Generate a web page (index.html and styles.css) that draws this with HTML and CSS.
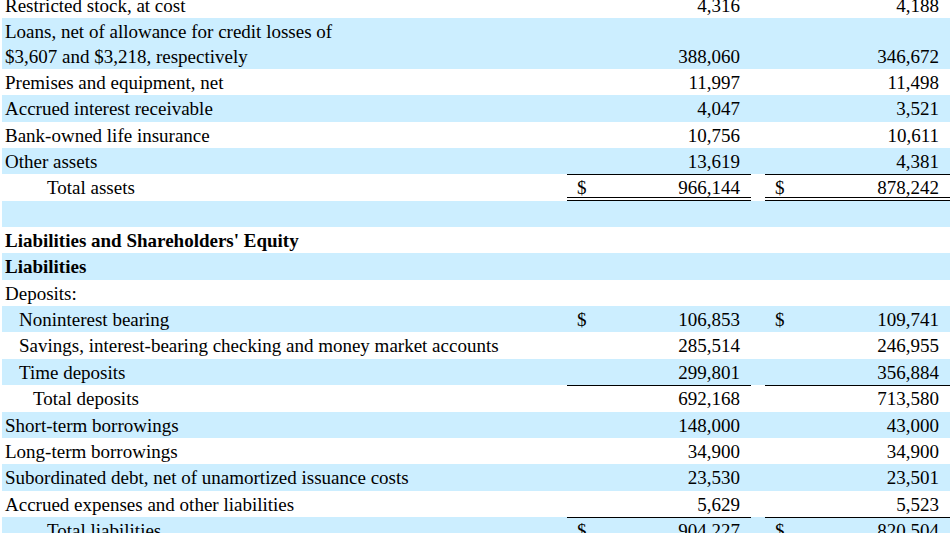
FILE: index.html
```html
<!DOCTYPE html>
<html>
<head>
<meta charset="utf-8">
<link rel="stylesheet" href="styles.css">
</head>
<body>
<table class="bs">
<colgroup>
<col class="c-label"><col class="c-sym"><col class="c-num"><col class="c-gap"><col class="c-sym"><col class="c-num2">
</colgroup>
<tbody>
<tr><td class="lbl">Restricted stock, at cost</td><td class="sym"></td><td class="num">4,316</td><td></td><td class="sym"></td><td class="num">4,188</td></tr>
<tr class="alt"><td class="lbl">Loans, net of allowance for credit losses of<br>$3,607 and $3,218, respectively</td><td class="sym"></td><td class="num">388,060</td><td></td><td class="sym"></td><td class="num">346,672</td></tr>
<tr><td class="lbl">Premises and equipment, net</td><td class="sym"></td><td class="num">11,997</td><td></td><td class="sym"></td><td class="num">11,498</td></tr>
<tr class="alt"><td class="lbl">Accrued interest receivable</td><td class="sym"></td><td class="num">4,047</td><td></td><td class="sym"></td><td class="num">3,521</td></tr>
<tr><td class="lbl">Bank-owned life insurance</td><td class="sym"></td><td class="num">10,756</td><td></td><td class="sym"></td><td class="num">10,611</td></tr>
<tr class="alt"><td class="lbl">Other assets</td><td class="sym"></td><td class="num">13,619</td><td></td><td class="sym"></td><td class="num">4,381</td></tr>
<tr><td class="lbl ind3">Total assets</td><td class="sym top dbl">$</td><td class="num top dbl">966,144</td><td></td><td class="sym top dbl">$</td><td class="num top dbl">878,242</td></tr>
<tr class="alt"><td class="lbl">&nbsp;</td><td></td><td></td><td></td><td></td><td></td></tr>
<tr><td class="lbl bold">Liabilities and Shareholders' Equity</td><td></td><td></td><td></td><td></td><td></td></tr>
<tr class="alt"><td class="lbl bold">Liabilities</td><td></td><td></td><td></td><td></td><td></td></tr>
<tr><td class="lbl">Deposits:</td><td></td><td></td><td></td><td></td><td></td></tr>
<tr class="alt"><td class="lbl ind1">Noninterest bearing</td><td class="sym">$</td><td class="num">106,853</td><td></td><td class="sym">$</td><td class="num">109,741</td></tr>
<tr><td class="lbl ind1">Savings, interest-bearing checking and money market accounts</td><td class="sym"></td><td class="num">285,514</td><td></td><td class="sym"></td><td class="num">246,955</td></tr>
<tr class="alt"><td class="lbl ind1">Time deposits</td><td class="sym"></td><td class="num">299,801</td><td></td><td class="sym"></td><td class="num">356,884</td></tr>
<tr><td class="lbl ind2">Total deposits</td><td class="sym top"></td><td class="num top">692,168</td><td></td><td class="sym top"></td><td class="num top">713,580</td></tr>
<tr class="alt"><td class="lbl">Short-term borrowings</td><td class="sym"></td><td class="num">148,000</td><td></td><td class="sym"></td><td class="num">43,000</td></tr>
<tr><td class="lbl">Long-term borrowings</td><td class="sym"></td><td class="num">34,900</td><td></td><td class="sym"></td><td class="num">34,900</td></tr>
<tr class="alt"><td class="lbl">Subordinated debt, net of unamortized issuance costs</td><td class="sym"></td><td class="num">23,530</td><td></td><td class="sym"></td><td class="num">23,501</td></tr>
<tr><td class="lbl">Accrued expenses and other liabilities</td><td class="sym"></td><td class="num">5,629</td><td></td><td class="sym"></td><td class="num">5,523</td></tr>
<tr class="alt"><td class="lbl ind3">Total liabilities</td><td class="sym top">$</td><td class="num top">904,227</td><td></td><td class="sym top">$</td><td class="num top">820,504</td></tr>
<tr><td class="lbl">&nbsp;</td><td></td><td></td><td></td><td></td><td></td></tr>
</tbody>
</table>
</body>
</html>
```
FILE: styles.css
```css
html, body {
  margin: 0;
  padding: 0;
  background: #ffffff;
}
body {
  overflow: hidden;
  font-family: "Liberation Serif", "Times New Roman", serif;
  font-size: 19px;
  color: #000000;
}
.bs {
  table-layout: fixed;
  border-collapse: collapse;
  width: 948px;
  margin: -8px 0 0 2px;
}
.c-label { width: 565px; }
.c-sym { width: 30px; }
.c-num { width: 154px; }
.c-gap { width: 14px; }
.c-num2 { width: 155px; }
.bs td {
  padding: 2px 0 0;
  line-height: 24.35px;
  height: 24.35px;
  vertical-align: bottom;
  white-space: nowrap;
}
.alt td {
  background-color: #cceeff;
}
.lbl {
  padding-left: 3px !important;
}
.ind1 { padding-left: 17px !important; }
.ind2 { padding-left: 31px !important; }
.ind3 { padding-left: 45px !important; }
.bold { font-weight: bold; }
.sym {
  padding-left: 10px !important;
  text-align: left;
}
.num {
  text-align: right;
  padding-right: 11px !important;
}
.top {
  background-image: linear-gradient(#000, #000);
  background-size: 100% 1px;
  background-position: left top;
  background-repeat: no-repeat;
}
.top.dbl {
  background-image: linear-gradient(#000, #000), linear-gradient(#000, #000), linear-gradient(#000, #000);
  background-size: 100% 1px, 100% 1px, 100% 1px;
  background-position: left top, left bottom 3px, left bottom;
  background-repeat: no-repeat;
}
```
